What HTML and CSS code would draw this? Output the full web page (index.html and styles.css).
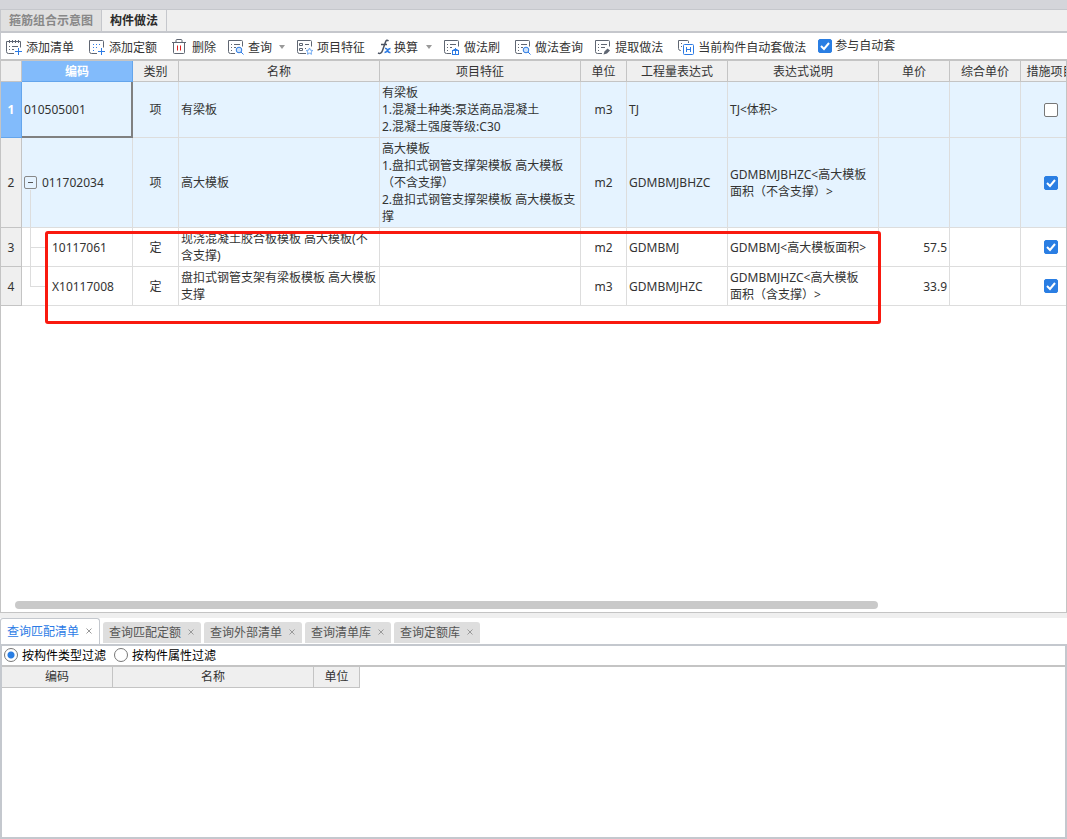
FILE: index.html
```html
<!DOCTYPE html>
<html lang="zh-CN">
<head>
<meta charset="utf-8">
<title>构件做法</title>
<link rel="stylesheet" href="styles.css">
</head>
<body>
<div class="app">
  <div class="titlebar"></div>
  <nav class="main-tabs">
    <button class="main-tab" type="button">箍筋组合示意图</button>
    <button class="main-tab current" type="button">构件做法</button>
  </nav>

  <div class="toolbar">
    <button class="tool spaced" type="button">
      <svg class="icon" viewBox="0 0 16 16"><path class="ln" d="M8 14.500H2.500a2 2 0 0 1-2-2V2.500h14v6M3.500 1v3M6.500 1v3M9.500 1v3M12.500 1v3M3 7.500h1M6 7.500h6M3 10.500h1M6 10.500h2"/><path class="bl" d="M12.500 9v7M9 12.500h7"/></svg>
      添加清单</button>
    <button class="tool spaced" type="button">
      <svg class="icon" viewBox="0 0 16 16"><path class="ln" d="M8 14.500H2.500a2 2 0 0 1-2-2V1.500h13a1 1 0 0 1 1 1v6"/><path class="bl" d="M4 5.500h1M7 5.500h1M10 5.500h1M4 8.500h1M7 8.500h1M4 11.500h1M12.500 9v7M9 12.500h7"/></svg>
      添加定额</button>
    <button class="tool" type="button">
      <svg class="icon" viewBox="0 0 16 16"><path class="ln" d="M0 3.500h14M4 3V1.500q0-1 1-1h4q1 0 1 1V3M1.500 4v9.500q0 1 1 1h9q1 0 1-1V4"/><path class="rd" d="M5.500 6.500v5M8.500 6.500v5"/></svg>
      删除</button>
    <button class="tool" type="button">
      <svg class="icon" viewBox="0 0 16 16"><path class="ln" d="M7 14.500H2.500a2 2 0 0 1-2-2V1.500h13a1 1 0 0 1 1 1v5M3 5.500h1M6 5.500h6M3 8.500h1M6 8.500h2M3 11.500h1"/><path class="bl fill" d="M13.800 11a2.800 2.800 0 1 1-5.600 0a2.800 2.800 0 1 1 5.600 0zM13 13l2.500 2.500"/></svg>
      查询<span class="arrow"></span></button>
    <button class="tool" type="button">
      <svg class="icon" viewBox="0 0 16 16"><path class="ln" d="M9 14.500H2.500a2 2 0 0 1-2-2V1.500h13a1 1 0 0 1 1 1v5M2.500 4.500h3v2h-3zM2.500 9.500h3v2h-3zM8 5.500h4M8 9.500h1"/><path class="bl pale" d="M12.500 9l1 2.200 2.300.3-1.700 1.500.4 2.300-2-1.100-2 1.100.4-2.300-1.700-1.500 2.300-.3z"/></svg>
      项目特征</button>
    <button class="tool tight" type="button">
      <svg class="icon" viewBox="0 0 16 16"><path class="fx" d="M11.500 2Q9.500 0 8.500 3L5.500 11.500Q4 15.500 1 14M4 5.500h6"/><path class="bx" d="M8 9.500q2-.5 2.500 2t3 2M13.500 9.500q-1.500 0-3 2t-3 2"/></svg>
      换算<span class="arrow"></span></button>
    <button class="tool spaced" type="button">
      <svg class="icon" viewBox="0 0 16 16"><path class="ln" d="M7 14.500H2.500a2 2 0 0 1-2-2V1.500h13a1 1 0 0 1 1 1v5M3 5.500h1M6 5.500h6M3 8.500h1M6 8.500h2M3 11.500h1"/><path class="bl" d="M8 11.500h7M11.500 9v2M8.500 12v3.500M11.500 12v4M14.500 12v3.500M9.500 10.500h4M8 15.500h7"/></svg>
      做法刷</button>
    <button class="tool" type="button">
      <svg class="icon" viewBox="0 0 16 16"><path class="ln" d="M7 14.500H2.500a2 2 0 0 1-2-2V1.500h13a1 1 0 0 1 1 1v5M3 5.500h1M6 5.500h6M3 8.500h1M6 8.500h2M3 11.500h1"/><path class="bl fill" d="M13.800 11a2.800 2.800 0 1 1-5.600 0a2.800 2.800 0 1 1 5.600 0zM13 13l2.500 2.500"/></svg>
      做法查询</button>
    <button class="tool spaced" type="button">
      <svg class="icon" viewBox="0 0 16 16"><path class="ln" d="M7 14.500H2.500a2 2 0 0 1-2-2V1.500h13a1 1 0 0 1 1 1v5M3 5.500h1M6 5.500h6M3 8.500h1M6 8.500h4M3 11.500h1"/><path class="dk" d="M8.500 15.500l1-3 3-3 2.500 2-3 3z"/></svg>
      提取做法</button>
    <button class="tool" type="button">
      <svg class="icon" viewBox="0 0 16 16"><path class="ln" d="M3 11.500H2.500a2 2 0 0 1-2-2V1.500h9a1 1 0 0 1 1 1V4M3 4.500h1M3 7.500h1"/><rect class="bl" x="5.500" y="5.500" width="10" height="10" rx="1"/><path class="bl" d="M8.500 8v5M12.500 8v5M8.500 10.500h4"/></svg>
      当前构件自动套做法</button>
    <label class="auto"><input class="check" type="checkbox" checked>参与自动套</label>
  </div>

  <main class="grid-panel">
    <table class="grid">
      <colgroup>
        <col class="w-num"><col class="w-code"><col class="w-small"><col class="w-name"><col class="w-name"><col class="w-small"><col class="w-expr"><col class="w-desc"><col class="w-price"><col class="w-price"><col class="w-flag">
      </colgroup>
      <thead>
        <tr><th></th><th class="active">编码</th><th>类别</th><th>名称</th><th>项目特征</th><th>单位</th><th>工程量表达式</th><th>表达式说明</th><th>单价</th><th>综合单价</th><th>措施项目</th></tr>
      </thead>
      <tbody>
        <tr class="item">
          <th class="active" scope="row">1</th><td class="selected">010505001</td><td class="mid">项</td><td>有梁板</td>
          <td>有梁板<br>1.混凝土种类:泵送商品混凝土<br>2.混凝土强度等级:C30</td>
          <td class="mid">m3</td><td>TJ</td><td>TJ&lt;体积&gt;</td><td class="num"></td><td class="num"></td>
          <td class="flag"><input class="check" type="checkbox" aria-label="措施项目 1"></td>
        </tr>
        <tr class="item">
          <th scope="row">2</th><td class="parent"><div class="node"><button class="toggle" type="button" aria-label="折叠"></button>011702034</div></td><td class="mid">项</td><td>高大模板</td>
          <td>高大模板<br>1.盘扣式钢管支撑架模板 高大模板<br>（不含支撑）<br>2.盘扣式钢管支撑架模板 高大模板支<br>撑</td>
          <td class="mid">m2</td><td>GDMBMJBHZC</td><td>GDMBMJBHZC&lt;高大模板<br>面积（不含支撑）&gt;</td><td class="num"></td><td class="num"></td>
          <td class="flag"><input class="check" type="checkbox" checked aria-label="措施项目 2"></td>
        </tr>
        <tr>
          <th scope="row">3</th><td class="child">10117061</td><td class="mid">定</td><td>现浇混凝土胶合板模板 高大模板(不<br>含支撑)</td><td></td>
          <td class="mid">m2</td><td>GDMBMJ</td><td>GDMBMJ&lt;高大模板面积&gt;</td><td class="num">57.5</td><td class="num"></td>
          <td class="flag"><input class="check" type="checkbox" checked aria-label="措施项目 3"></td>
        </tr>
        <tr>
          <th scope="row">4</th><td class="child last">X10117008</td><td class="mid">定</td><td>盘扣式钢管支架有梁板模板 高大模板<br>支撑</td><td></td>
          <td class="mid">m3</td><td>GDMBMJHZC</td><td>GDMBMJHZC&lt;高大模板<br>面积（含支撑）&gt;</td><td class="num">33.9</td><td class="num"></td>
          <td class="flag"><input class="check" type="checkbox" checked aria-label="措施项目 4"></td>
        </tr>
      </tbody>
    </table>
    <div class="highlight"></div>
    <div class="scroll-thumb"></div>
  </main>

  <nav class="query-tabs">
    <button class="query-tab current" type="button">查询匹配清单<svg class="close" viewBox="0 0 6 6"><path d="M.5.5l5 5M5.500.5l-5 5"/></svg></button>
    <button class="query-tab" type="button">查询匹配定额<svg class="close" viewBox="0 0 6 6"><path d="M.5.5l5 5M5.500.5l-5 5"/></svg></button>
    <button class="query-tab" type="button">查询外部清单<svg class="close" viewBox="0 0 6 6"><path d="M.5.5l5 5M5.500.5l-5 5"/></svg></button>
    <button class="query-tab" type="button">查询清单库<svg class="close" viewBox="0 0 6 6"><path d="M.5.5l5 5M5.500.5l-5 5"/></svg></button>
    <button class="query-tab" type="button">查询定额库<svg class="close" viewBox="0 0 6 6"><path d="M.5.5l5 5M5.500.5l-5 5"/></svg></button>
  </nav>
  <section class="query-panel">
    <div class="filters">
      <label class="filter"><input class="radio" type="radio" name="filter" checked>按构件类型过滤</label>
      <label class="filter"><input class="radio" type="radio" name="filter">按构件属性过滤</label>
    </div>
    <table class="grid result">
      <colgroup><col class="w-code"><col class="w-name"><col class="w-small"></colgroup>
      <thead><tr><th>编码</th><th>名称</th><th>单位</th></tr></thead>
    </table>
  </section>
</div>
</body>
</html>
```
FILE: styles.css
```css
* { box-sizing: border-box; }
body {
  margin: 0;
  font: 12px/17px "Noto Sans", "Noto Sans CJK SC", sans-serif;
  color: #333;
  background: #fff;
}
button {
  margin: 0;
  padding: 0;
  border: 0;
  background: none;
  font: inherit;
  color: inherit;
  white-space: nowrap;
}
.app { display: flex; flex-direction: column; min-height: 100vh; overflow: hidden; }

.titlebar { height: 10px; background: #d4d5da; border-bottom: 1px solid #c5c7cc; }
.main-tabs {
  display: flex;
  height: 23px;
  background: #efefef;
  border-bottom: 2px solid #c5c7cc;
  border-left: 1px solid #c5c7cc;
}
.main-tab {
  padding: 0 8px;
  font-weight: bold;
  color: #888;
  background: #e0e0e0;
  border-right: 1px solid #c5c7cc;
}
.main-tab.current { color: #2b2b2b; background: #efefef; }

.toolbar {
  display: flex;
  align-items: center;
  gap: 12px;
  height: 28px;
  padding: 2px 0 0 5px;
  border-left: 1px solid #c5c7cc;
  border-bottom: 2px solid #c4c4c4;
}
.tool { display: flex; align-items: center; gap: 4px; }
.tool.spaced { margin-right: 3px; }
.tool.tight { gap: 1px; }
.icon { width: 16px; height: 16px; flex: none; fill: none; }
.ln { stroke: #5f6672; }
.bl { stroke: #2c7be5; }
.fill { fill: #cfe3fb; }
.pale { stroke: #6fa8f0; fill: #fff; }
.rd { stroke: #e02020; }
.dk { fill: #5f6672; }
.fx { stroke: #4b5362; stroke-width: 1.5; }
.bx { stroke: #2c7be5; stroke-width: 1.5; }
.arrow { margin: 0 0 0 3px; border: 3px solid transparent; border-top: 4px solid #999; border-bottom: 0; }
.tight .arrow { margin-left: 7px; }
.auto { display: flex; align-items: center; gap: 3px; padding-bottom: 3px; white-space: nowrap; }

.check {
  appearance: none;
  display: block;
  width: 14px;
  height: 14px;
  margin: 0;
  border: 1px solid #777;
  border-radius: 2px;
  background: #fff;
}
.check:checked {
  border-color: #2a7ee3;
  background: #2a7ee3 url("data:image/svg+xml,%3Csvg xmlns='http://www.w3.org/2000/svg' viewBox='0 0 12 12'%3E%3Cpath d='M2 6l3 3 5-6' fill='none' stroke='white' stroke-width='2'/%3E%3C/svg%3E") center / 12px no-repeat;
}
.flag .check { margin: 0 auto; }

.grid-panel {
  position: relative;
  display: flex;
  flex: 552 0 0;
  flex-direction: column;
  justify-content: space-between;
  align-items: flex-start;
  overflow: hidden;
  padding-bottom: 3px;
  border: 1px solid #c4c4c4;
  border-top: 0;
}
.grid { table-layout: fixed; width: 1080px; border-spacing: 0; }
.w-num { width: 21px; }
.w-code { width: 111px; }
.w-small { width: 46px; }
.w-name { width: 201px; }
.w-expr { width: 101px; }
.w-desc { width: 151px; }
.w-price { width: 71px; }
.w-flag { width: 60px; }
.grid th, .grid td {
  padding: 2px;
  border-right: 1px solid #ddd;
  border-bottom: 1px solid #ddd;
  white-space: nowrap;
}
.grid td { text-align: left; }
.grid th { font-weight: normal; background: #efefef; border-color: #c4c4c4; }
.grid thead th { height: 21px; padding: 0; }
.grid th.active { font-weight: bold; color: #fff; background: #82bbfb; border-color: #64a5ec; }
.item td { background: #e5f3ff; }
.grid td.mid { text-align: center; }
.grid td.num { text-align: right; }
.grid td.selected { border-right: 2px solid #808080; border-bottom: 2px solid #808080; }

.node { display: flex; align-items: center; gap: 5px; }
.toggle {
  display: grid;
  place-items: center;
  width: 13px;
  height: 13px;
  border: 1px solid #888;
  border-radius: 2px;
}
.toggle::before { content: ""; width: 5px; height: 1px; background: #555; }
.grid td.parent, .grid td.child { position: relative; }
.grid td.child { padding-left: 30px; }
.parent::after, .child::before, .child::after { content: ""; position: absolute; left: 8px; background: #ddd; }
.parent::after { top: 52px; bottom: 0; width: 1px; }
.child::before { top: 0; bottom: 0; width: 1px; }
.child.last::before { bottom: 50%; }
.child::after { top: 50%; width: 16px; height: 1px; }

.highlight {
  position: absolute;
  top: 170px;
  left: 44px;
  width: 836px;
  height: 93px;
  border: 3px solid #f9190f;
  border-radius: 3px;
  pointer-events: none;
}
.scroll-thumb { width: 81%; height: 8px; margin-left: 14px; border-radius: 4px; background: #c9c9c9; }

.query-tabs {
  display: flex;
  align-items: flex-end;
  gap: 3px;
  height: 33px;
  border-top: 5px solid #efefef;
  border-bottom: 2px solid #c4c8ce;
}
.query-tab {
  display: flex;
  align-items: center;
  gap: 7px;
  height: 21px;
  margin-bottom: 1px;
  padding: 0 7px 0 6px;
  border-radius: 3px 3px 0 0;
  color: #555;
  background: #dedede;
}
.query-tab.current {
  height: 26px;
  margin-bottom: 0;
  border: 1px solid #c4c8ce;
  border-bottom: 0;
  color: #2c7be5;
  background: #fff;
}
.close { width: 6px; height: 6px; stroke: #999; }

.query-panel { flex: 193 0 0; border: 2px solid #c4c8ce; border-top: 0; }
.filters {
  display: flex;
  align-items: center;
  gap: 8px;
  height: 21px;
  padding-left: 2px;
  border-bottom: 2px solid #c4c4c4;
  color: #000;
}
.filter { display: flex; align-items: center; gap: 4px; white-space: nowrap; }
.radio {
  appearance: none;
  width: 14px;
  height: 14px;
  margin: 0;
  border: 1px solid #777;
  border-radius: 50%;
  background: #fff;
}
.radio:checked { background: radial-gradient(circle, #2a7ee3 3px, #fff 4px); }
.grid.result { width: 358px; }
```
